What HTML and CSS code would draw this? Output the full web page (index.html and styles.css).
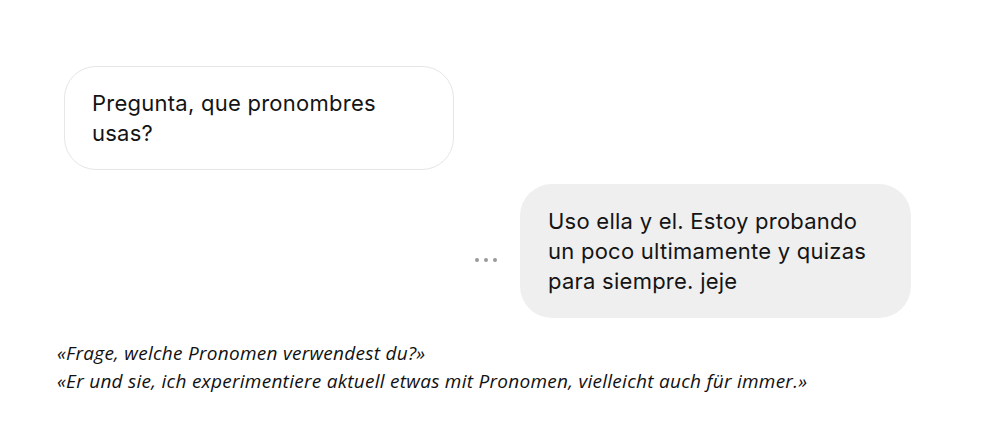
FILE: index.html
```html
<!DOCTYPE html>
<html lang="es">
<head>
    <meta charset="UTF-8">
    <meta name="viewport" content="width=device-width, initial-scale=1.0">
    <title>Chat</title>
    <link rel="stylesheet" href="styles.css">
</head>
<body>
    <div class="chat">
        <div class="row row-in">
            <div class="bubble bubble-in">Pregunta, que pronombres usas?</div>
        </div>
        <div class="row row-out">
            <span class="dots"><i></i><i></i><i></i></span>
            <div class="bubble bubble-out">Uso ella y el. Estoy probando un poco ultimamente y quizas para siempre. jeje</div>
        </div>
    </div>
    <div class="caption">
        <p>«Frage, welche Pronomen verwendest du?»</p>
        <p>«Er und sie, ich experimentiere aktuell etwas mit Pronomen, vielleicht auch für immer.»</p>
    </div>
</body>
</html>
```

FILE: styles.css
```css
body
{
    margin: 0;
    background: #fff;
    width: 1000px;
    height: 436px;
    overflow: hidden;
}
.chat
{
    display: flex;
    flex-direction: column;
    gap: 14px;
    padding-top: 66px;
    font-family: Inter, "Liberation Sans", Arial, sans-serif;
    font-size: 22px;
    letter-spacing: 0.25px;
    line-height: 30px;
    color: #141414;
}
.row
{
    display: flex;
    align-items: center;
}
.row-in
{
    padding-left: 64px;
}
.row-out
{
    justify-content: flex-end;
    padding-right: 89px;
    gap: 23px;
}
.bubble
{
    box-sizing: border-box;
    width: 390px;
    padding: 22px 28px;
    border-radius: 32px;
}
.bubble-in
{
    border: 1px solid #e6e6e6;
    padding: 21px 27px;
}
.bubble-out
{
    width: 391px;
    background-color: #efefef;
}
.dots
{
    display: flex;
    gap: 5px;
    margin-top: 18px;
}
.dots i
{
    width: 4px;
    height: 4px;
    border-radius: 50%;
    background: #9a9a9a;
}
.caption
{
    padding: 21px 0 0 57px;
    font-family: "Open Sans", Lato, sans-serif;
    font-style: italic;
    font-size: 19px;
    letter-spacing: 0.27px;
    line-height: 28px;
    color: #111;
}
.caption p
{
    margin: 0;
}
```
